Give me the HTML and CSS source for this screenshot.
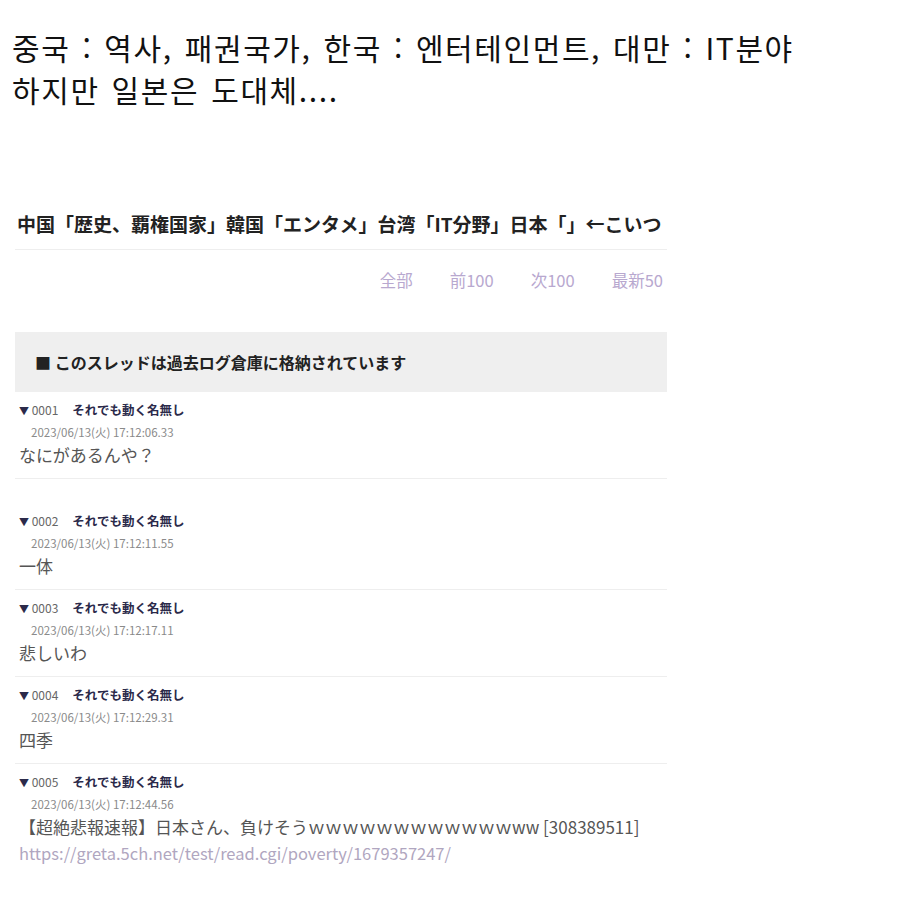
FILE: index.html
```html
<!DOCTYPE html>
<html lang="ko">
<head>
    <meta charset="utf-8">
    <title>중국 : 역사, 패권국가</title>
    <link rel="stylesheet" href="styles.css">
</head>
<body>
    <div class="caption">
        <p>중국 : 역사, 패권국가, 한국 : 엔터테인먼트, 대만 : IT분야</p>
        <p>하지만 일본은 도대체....</p>
    </div>

    <div class="thread" lang="ja">
        <h1 class="thread-title">中国「歴史、覇権国家」韓国「エンタメ」台湾「IT分野」日本「」←こいつ</h1>
        <div class="pager">
            <a href="#">全部</a>
            <a href="#">前100</a>
            <a href="#">次100</a>
            <a href="#">最新50</a>
        </div>
        <div class="notice">■ このスレッドは過去ログ倉庫に格納されています</div>

        <div class="post first">
            <div class="post-head"><span class="mark">▼</span> <span class="num">0001</span><span class="name">それでも動く名無し</span></div>
            <div class="post-date">2023/06/13(火) 17:12:06.33</div>
            <div class="post-body">なにがあるんや？</div>
        </div>
        <div class="post">
            <div class="post-head"><span class="mark">▼</span> <span class="num">0002</span><span class="name">それでも動く名無し</span></div>
            <div class="post-date">2023/06/13(火) 17:12:11.55</div>
            <div class="post-body">一体</div>
        </div>
        <div class="post">
            <div class="post-head"><span class="mark">▼</span> <span class="num">0003</span><span class="name">それでも動く名無し</span></div>
            <div class="post-date">2023/06/13(火) 17:12:17.11</div>
            <div class="post-body">悲しいわ</div>
        </div>
        <div class="post">
            <div class="post-head"><span class="mark">▼</span> <span class="num">0004</span><span class="name">それでも動く名無し</span></div>
            <div class="post-date">2023/06/13(火) 17:12:29.31</div>
            <div class="post-body">四季</div>
        </div>
        <div class="post last">
            <div class="post-head"><span class="mark">▼</span> <span class="num">0005</span><span class="name">それでも動く名無し</span></div>
            <div class="post-date">2023/06/13(火) 17:12:44.56</div>
            <div class="post-body">【超絶悲報速報】日本さん、負けそうｗｗｗｗｗｗｗｗｗｗｗｗww [308389511]</div>
            <a class="post-link" href="#">https://greta.5ch.net/test/read.cgi/poverty/1679357247/</a>
        </div>
    </div>
</body>
</html>
```

FILE: styles.css
```css
body {
    margin: 0;
    background-color: #fff;
    font-family: "Noto Sans CJK JP", "Noto Sans", sans-serif;
    color: #222;
}
.caption {
    padding: 26px 0 0 12px;
    font-family: "Noto Sans CJK KR", sans-serif;
    font-size: 30px;
    line-height: 42px;
    color: #111;
    letter-spacing: 1.6px;
    word-spacing: 2px;
}
.caption p {
    margin: 0;
}
.thread {
    width: 652px;
    margin: 101px 0 0 15px;
}
.thread-title {
    margin: 0;
    padding: 0 0 12px 2px;
    font-size: 19px;
    line-height: 26px;
    font-weight: bold;
    color: #222;
    border-bottom: 1px solid #eee;
    white-space: nowrap;
}
.pager {
    display: flex;
    justify-content: flex-end;
    gap: 37px;
    padding: 17px 4px 0 0;
    height: 30px;
}
.pager a {
    font-size: 16.5px;
    line-height: 26px;
    color: #b8a8cf;
    text-decoration: none;
}
.notice {
    margin-top: 35px;
    height: 60px;
    display: flex;
    align-items: center;
    padding-left: 20px;
    background-color: #efefef;
    font-size: 16px;
    font-weight: bold;
    color: #222;
}
.post {
    padding: 9px 0 12px 4px;
    border-bottom: 1px solid #eee;
}
.post.first {
    margin-bottom: 24px;
}
.post.last {
    border-bottom: none;
}
.post-head {
    font-size: 12px;
    line-height: 18px;
    color: #2b2a4a;
}
.post-head .mark {
    font-size: 10px;
}
.post-head .num {
    color: #666;
    margin-right: 14px;
}
.post-head .name {
    font-weight: bold;
    font-size: 12.5px;
}
.post-date {
    padding-left: 12px;
    font-size: 11.5px;
    line-height: 24px;
    color: #8a8a8a;
}
.post-body {
    font-size: 17px;
    line-height: 22px;
    color: #555;
}
.post-link {
    display: block;
    margin-top: 4px;
    font-size: 16.5px;
    line-height: 22px;
    color: #b0a6c0;
    text-decoration: none;
}
```
